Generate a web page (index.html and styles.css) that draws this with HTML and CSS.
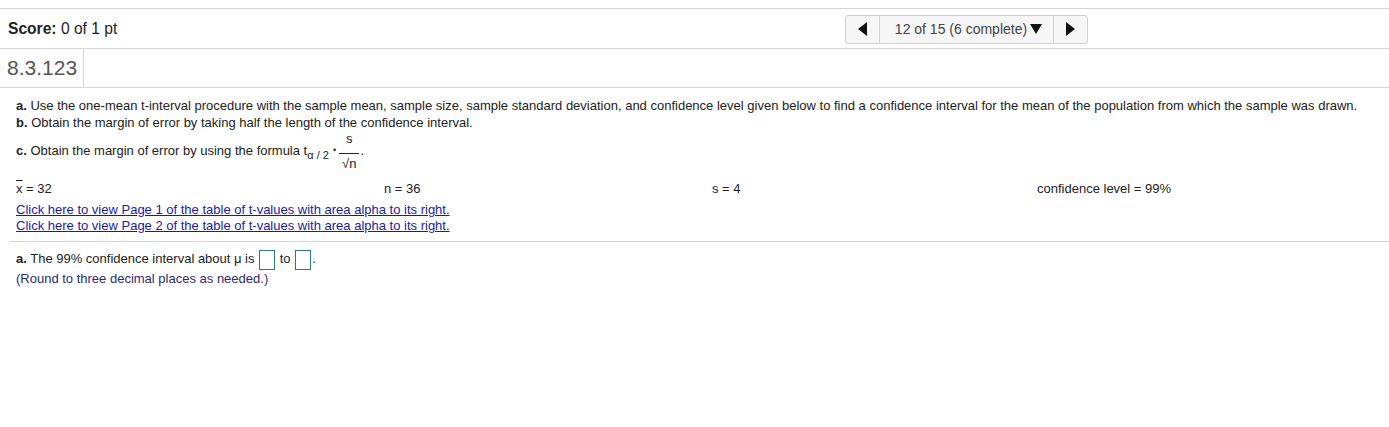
FILE: index.html
```html
<!DOCTYPE html>
<html>

<head>
  <meta charset="utf-8" />
  <title>8.3.123</title>
  <link rel="stylesheet" href="styles.css">
</head>

<body>
  <div class="topbar">
    <div class="score"><b>Score:</b> 0 of 1 pt</div>
    <div class="nav">
      <span class="nav-btn"><span class="tri tri-left"></span></span>
      <span class="nav-mid">12 of 15 (6 complete)<span class="tri tri-down"></span></span>
      <span class="nav-btn"><span class="tri tri-right"></span></span>
    </div>
  </div>
  <div class="qid-row">
    <div class="qid">8.3.123</div>
  </div>

  <div class="question">
    <p class="line"><b>a.</b> Use the one-mean t-interval procedure with the sample mean, sample size, sample standard deviation, and confidence level given below to find a confidence interval for the mean of the population from which the sample was drawn.</p>
    <p class="line"><b>b.</b> Obtain the margin of error by taking half the length of the confidence interval.</p>
    <p class="line formula-line"><b>c.</b> Obtain the margin of error by using the formula <span class="t">t<sub>α / 2</sub></span><span class="dot">•</span><span class="frac"><span class="num">s</span><span class="den">√n</span></span>.</p>

    <div class="givens">
      <span class="given"><span class="xbar">x</span> = 32</span>
      <span class="given">n = 36</span>
      <span class="given">s = 4</span>
      <span class="given">confidence level = 99%</span>
    </div>
    <a class="tlink" href="#">Click here to view Page 1 of the table of t-values with area alpha to its right.</a>
    <a class="tlink" href="#">Click here to view Page 2 of the table of t-values with area alpha to its right.</a>
  </div>

  <div class="answer">
    <p class="line answer-line"><b>a.</b> The 99% confidence interval about μ is <span class="box"></span> to <span class="box"></span>.</p>
    <p class="hint">(Round to three decimal places as needed.)</p>
  </div>
</body>

</html>
```

FILE: styles.css
```css
body {
  margin: 0;
  font-family: "Liberation Sans", Arial, sans-serif;
  color: #222;
  background: #fff;
}

.topbar {
  margin-top: 8px;
  height: 39px;
  display: flex;
  align-items: center;
  border-top: 1px solid #d4d4d4;
  border-bottom: 1px solid #d4d4d4;
}

.score {
  width: 837px;
  padding-left: 8px;
  font-size: 15.6px;
  color: #222;
}

.nav {
  display: flex;
  height: 27px;
  border: 1px solid #d0d0d0;
  border-radius: 3px;
  background: #f6f6f6;
  margin-top: 1px;
}

.nav-btn {
  width: 33px;
  display: flex;
  align-items: center;
  justify-content: center;
}

.nav-mid {
  width: 175px;
  border-left: 1px solid #d0d0d0;
  border-right: 1px solid #d0d0d0;
  display: flex;
  align-items: center;
  justify-content: center;
  font-size: 14px;
  color: #444;
  padding-left: 4px;
  box-sizing: border-box;
}

.tri {
  display: inline-block;
  width: 0;
  height: 0;
}

.tri-left {
  border-top: 7px solid transparent;
  border-bottom: 7px solid transparent;
  border-right: 9px solid #111;
}

.tri-right {
  border-top: 7px solid transparent;
  border-bottom: 7px solid transparent;
  border-left: 9px solid #111;
}

.tri-down {
  margin-left: 3px;
  border-left: 6px solid transparent;
  border-right: 6px solid transparent;
  border-top: 10px solid #111;
}

.qid-row {
  height: 38px;
  border-bottom: 1px solid #d4d4d4;
  display: flex;
}

.qid {
  padding: 0 6px 0 7px;
  border-right: 1px solid #d4d4d4;
  font-size: 21px;
  color: #555;
  display: flex;
  align-items: center;
}

.question {
  padding: 9px 16px 0 16px;
}

.line {
  margin: 0;
  font-size: 13px;
  line-height: 17px;
}

.formula-line {
  margin-top: 1px;
}

.t sub {
  font-size: 11px;
  vertical-align: -4px;
  line-height: 0;
}

.dot {
  font-size: 9px;
  margin: 0 3px 0 4px;
  vertical-align: 2px;
}

.frac {
  display: inline-flex;
  flex-direction: column;
  align-items: center;
  vertical-align: 12px;
  margin: 0 1px 0 0;
  line-height: 14px;
}

.num {
  padding: 0 3px 7px;
}

.den {
  border-top: 1px solid #222;
  padding: 3px 3px 0;
}

.givens {
  display: grid;
  grid-template-columns: 368px 328px 325px auto;
  margin-top: 9px;
  font-size: 13px;
  line-height: 17px;
}

.xbar {
  text-decoration: overline;
}

.tlink {
  display: block;
  width: fit-content;
  color: #1a1aaa;
  font-size: 13px;
  line-height: 16px;
}

.givens + .tlink {
  margin-top: 5px;
}

.answer {
  margin: 7px 0 0 10px;
  padding: 7px 6px 0;
  border-top: 1px solid #d4d4d4;
}

.answer-line {
  line-height: 20px;
}

.box {
  display: inline-block;
  width: 14px;
  height: 18px;
  border: 1px solid #2a7a7a;
  vertical-align: middle;
  margin: 0 1px;
}

.hint {
  margin: 1px 0 0;
  font-size: 13px;
  line-height: 16px;
  color: #2b2b6e;
}
```
